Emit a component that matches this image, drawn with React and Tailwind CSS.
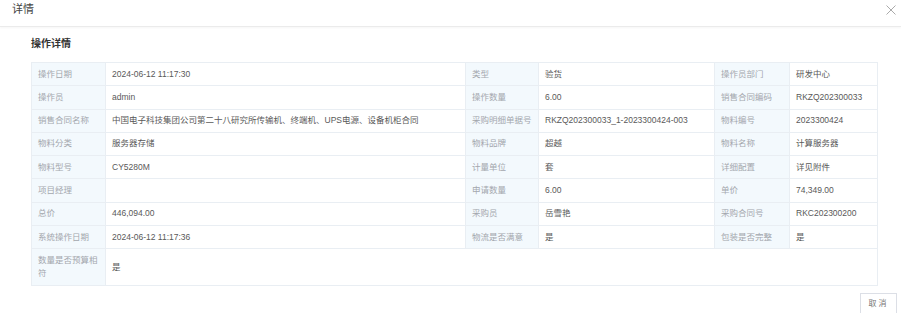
import React from 'react';

const rows = [
  [['操作日期', '2024-06-12 11:17:30'], ['类型', '验货'], ['操作员部门', '研发中心']],
  [['操作员', 'admin'], ['操作数量', '6.00'], ['销售合同编码', 'RKZQ202300033']],
  [['销售合同名称', '中国电子科技集团公司第二十八研究所传输机、终端机、UPS电源、设备机柜合同'], ['采购明细单据号', 'RKZQ202300033_1-2023300424-003'], ['物料编号', '2023300424']],
  [['物料分类', '服务器存储'], ['物料品牌', '超越'], ['物料名称', '计算服务器']],
  [['物料型号', 'CY5280M'], ['计量单位', '套'], ['详细配置', '详见附件']],
  [['项目经理', ''], ['申请数量', '6.00'], ['单价', '74,349.00']],
  [['总价', '446,094.00'], ['采购员', '岳雪艳'], ['采购合同号', 'RKC202300200']],
  [['系统操作日期', '2024-06-12 11:17:36'], ['物流是否满意', '是'], ['包装是否完整', '是']],
];

const labelCls = 'border border-[#e9eef3] bg-[#f3f9fd] px-[6px] py-[4.5px] text-left align-middle font-normal text-[#a3a7ad]';
const valueCls = 'border border-[#e9eef3] bg-white px-[6px] py-[4.5px] align-middle text-[#595959]';

export default function App() {
  return (
    <div className="h-[313px] w-[901px] overflow-hidden bg-white" style={{ fontFamily: '"Liberation Sans", "Noto Sans CJK SC", sans-serif' }}>
      <div className="flex h-[27px] items-center justify-between border-b border-[#ebebeb] pl-[12px] pr-[5px] shadow-[0_1px_2px_rgba(0,0,0,0.04)]">
        <span className="pb-[8px] text-[11px] leading-[14px] text-[#444]">详情</span>
        <svg className="mb-[7px] h-[10px] w-[10px]" viewBox="0 0 10 10" fill="none">
          <path d="M0.5 0.5 9.5 9.5M9.5 0.5 0.5 9.5" stroke="#a0a0a0" strokeWidth="0.9" />
        </svg>
      </div>
      <div className="pl-[31px] pr-[24px] pt-[10px]">
        <div className="mb-[11px] text-[10px] font-bold leading-[14px] text-[#333]">操作详情</div>
        <table className="w-[846px] table-fixed border-collapse text-[8.5px] leading-[13.3px]">
          <colgroup>
            <col className="w-[74px]" />
            <col className="w-[360px]" />
            <col className="w-[73px]" />
            <col className="w-[176px]" />
            <col className="w-[75px]" />
            <col className="w-[88px]" />
          </colgroup>
          <tbody>
            {rows.map((r, i) => (
              <tr key={i}>
                {r.map(([k, v]) => (
                  <React.Fragment key={k}>
                    <th className={labelCls}>{k}</th>
                    <td className={valueCls}>{v}</td>
                  </React.Fragment>
                ))}
              </tr>
            ))}
            <tr>
              <th className={labelCls}>数量是否预算相符</th>
              <td className={valueCls} colSpan={5}>是</td>
            </tr>
          </tbody>
        </table>
      </div>
      <div className="flex justify-end pr-[4px] pt-[7px]">
        <button className="h-[22px] w-[37px] border border-[#dcdfe6] bg-white text-[8px] tracking-[2px] text-[#777]">取消</button>
      </div>
    </div>
  );
}
